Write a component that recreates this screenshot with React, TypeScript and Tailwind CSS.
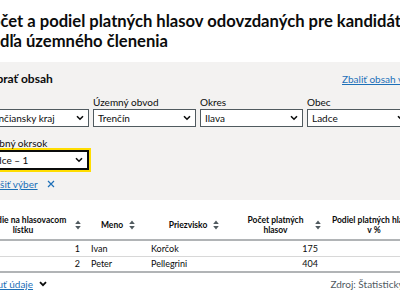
function SortIcon() {
  return (
    <svg width="6" height="10" viewBox="0 0 6 10" className="shrink-0">
      <path d="M3 0.5L5.8 4H0.2z M3 9.5L0.2 6h5.6z" fill="#505a5f" />
    </svg>
  );
}

function Chevron({ className = "" }: { className?: string }) {
  return (
    <svg width="8" height="6" viewBox="0 0 8 6" className={className}>
      <path d="M1 1.2l3 3 3-3" fill="none" stroke="#0b0c0c" strokeWidth="1.6" />
    </svg>
  );
}

const filters = [
  { label: "Kraj", value: "Trenčiansky kraj", w: "w-[109px]" },
  { label: "Územný obvod", value: "Trenčín", w: "w-[103px]" },
  { label: "Okres", value: "Ilava", w: "w-[103px]" },
  { label: "Obec", value: "Ladce", w: "w-[103px]" },
];

const rows = [
  { n: 1, meno: "Ivan", priezvisko: "Korčok", pocet: 175 },
  { n: 2, meno: "Peter", priezvisko: "Pellegrini", pocet: 404 },
];

export default function App() {
  return (
    <div className="h-[300px] w-[400px] overflow-hidden bg-white font-['Lato',sans-serif] text-[#0b0c0c]">
      <div className="-ml-[20px] w-[460px]">
        {/* Title */}
        <h1 className="whitespace-nowrap pl-[1px] pt-[11px] text-[16.6px] font-bold leading-[20px]">
          Počet a podiel platných hlasov odovzdaných pre kandidátov
          <br />
          podľa územného členenia
        </h1>

        {/* Filter panel */}
        <section className="mt-[11px] bg-[#f3f2f1] pb-[9px] pt-[7px]">
          <div className="flex items-center">
            <h2 className="ml-[2px] w-[360px] text-[12px] font-bold leading-[20px]">Vybrať obsah</h2>
            <a className="whitespace-nowrap text-[10px] leading-[14px] text-[#1d70b8] underline">
              Zbaliť obsah výberu
            </a>
          </div>

          <div className="mt-[6px] flex gap-[4px]">
            {filters.map((f) => (
              <div key={f.label} className={`${f.w} shrink-0`}>
                <div className="text-[10px] leading-[14px]">{f.label}</div>
                <div className="flex h-[18px] items-center justify-between border-[1.5px] border-[#505a5f] bg-white pl-[4px] pr-[4px] text-[10px]">
                  <span className="whitespace-nowrap">{f.value}</span>
                  <Chevron />
                </div>
              </div>
            ))}
          </div>

          <div className="mt-[9px] w-[109px]">
            <div className="text-[10px] leading-[14px]">Volebný okrsok</div>
            <div className="flex h-[20px] items-center justify-between border-2 border-[#0b0c0c] bg-white pl-[4px] pr-[4px] text-[10px] ring-2 ring-[#ffdd00]">
              <span className="whitespace-nowrap">Ladce – 1</span>
              <Chevron />
            </div>
          </div>

          <div className="ml-[5px] mt-[7px] flex items-center gap-[9px] text-[10px] leading-[14px] text-[#1d70b8]">
            <a className="underline">Zrušiť výber</a>
            <svg width="8" height="8" viewBox="0 0 8 8">
              <path d="M1 1l6 6M7 1L1 7" stroke="#1d70b8" strokeWidth="1.2" />
            </svg>
          </div>
        </section>

        {/* Results table */}
        <div className="mt-[10px] text-[9px]">
          <div className="grid h-[31px] grid-cols-[108px_60px_92px_85px_1fr] items-center border-b-2 border-[#b1b4b6] text-[8.5px] font-bold leading-[10px]">
            <div className="flex items-center justify-end gap-[6px] pr-[7px]">
              <span className="w-[92px] shrink-0 text-center">Poradie na hlasovacom lístku</span>
              <SortIcon />
            </div>
            <div className="flex items-center justify-center gap-[6px]">
              <span>Meno</span>
              <SortIcon />
            </div>
            <div className="flex items-center justify-center gap-[6px]">
              <span>Priezvisko</span>
              <SortIcon />
            </div>
            <div className="flex items-center justify-center gap-[8px]">
              <span className="w-[62px] text-center">Počet platných hlasov</span>
              <SortIcon />
            </div>
            <div className="flex items-center gap-[6px] pl-[6px]">
              <span className="w-[86px] shrink-0 text-center">Podiel platných hlasov v %</span>
              <SortIcon />
            </div>
          </div>
          {rows.map((r, i) => (
            <div
              key={r.n}
              className={`grid h-[16px] grid-cols-[108px_60px_92px_85px_1fr] items-center leading-[12px] ${
                i === rows.length - 1 ? "border-b-2 border-[#b1b4b6]" : "border-b border-[#d8d8d8]"
              }`}
            >
              <div className="pr-[8px] text-right">{r.n}</div>
              <div className="pl-[3px]">{r.meno}</div>
              <div className="pl-[3px]">{r.priezvisko}</div>
              <div className="pr-[7px] text-right">{r.pocet}</div>
              <div />
            </div>
          ))}
        </div>

        {/* Footer */}
        <div className="mt-[4px] flex items-center">
          <div className="-ml-[10px] flex w-[362px] items-center gap-[6px]">
            <a className="text-[10px] leading-[14px] text-[#1d70b8] underline">Stiahnuť údaje</a>
            <svg width="8" height="6" viewBox="0 0 8 6">
              <path d="M1 1.2l3 3 3-3" fill="none" stroke="#0b0c0c" strokeWidth="1.8" />
            </svg>
          </div>
          <span className="whitespace-nowrap text-[10px] leading-[14px] text-[#505a5f]">
            Zdroj: Štatistický úrad SR
          </span>
        </div>
      </div>
    </div>
  );
}
